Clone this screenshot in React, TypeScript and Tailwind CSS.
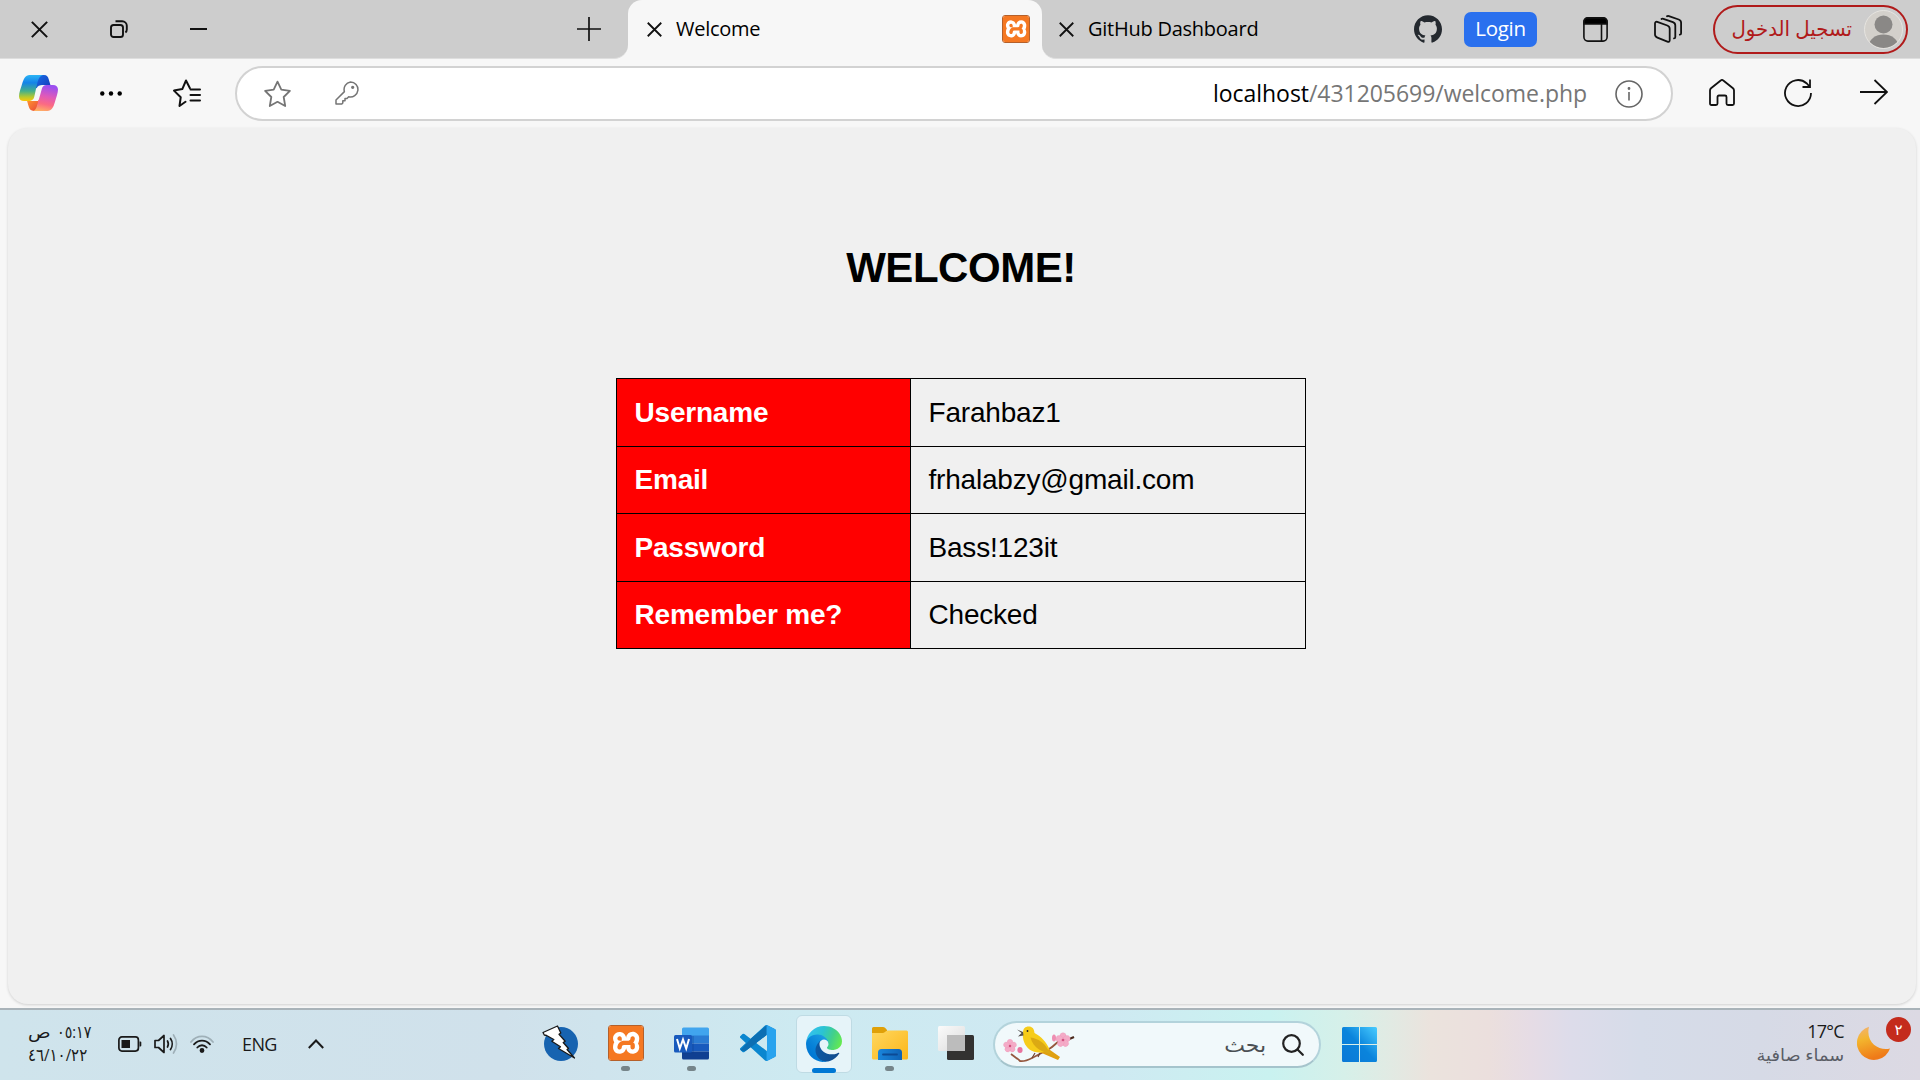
import React from "react";
import { SiGithub, SiXampp } from "react-icons/si";

const rows = [
  ["Username", "Farahbaz1"],
  ["Email", "frhalabzy@gmail.com"],
  ["Password", "Bass!123it"],
  ["Remember me?", "Checked"],
];

const CloseIcon = ({ className }: { className: string }) => (
  <svg className={className} viewBox="0 0 16 16" fill="none" stroke="#111" strokeWidth="1.9" preserveAspectRatio="none">
    <path d="M.8.8l14.4 14.4M15.2.8L.8 15.2" />
  </svg>
);

const RestoreIcon = () => (
  <svg className="h-[18px] w-[18px]" viewBox="0 0 18 18" fill="none" stroke="#111" strokeWidth="1.9">
    <rect x="1" y="5" width="12" height="12" rx="2.6" />
    <path d="M5.5 1.2H12.2a4.6 4.6 0 0 1 4.6 4.6V9.5c0 1.5-.6 2.4-1.4 3" />
  </svg>
);

const XamppIcon = ({ className, glyph }: { className: string; glyph: string }) => (
  <span className={`${className} flex shrink-0 items-center justify-center overflow-hidden border border-[#b5602a] bg-white text-[#f57822]`}>
    <SiXampp className={`${glyph} shrink-0`} />
  </span>
);

const CopilotIcon = () => (
  <svg className="h-[36px] w-[39px]" viewBox="0 0 39 37" preserveAspectRatio="none">
    <defs>
      <linearGradient id="cpA" x1="0" y1="0" x2="0" y2="1">
        <stop offset="0" stopColor="#2cb5f5" />
        <stop offset=".3" stopColor="#1583e8" />
        <stop offset=".62" stopColor="#44b08a" />
        <stop offset=".85" stopColor="#b9c92c" />
        <stop offset="1" stopColor="#fbc60a" />
      </linearGradient>
      <linearGradient id="cpB" x1=".4" y1="0" x2=".2" y2="1">
        <stop offset="0" stopColor="#9c4ff0" />
        <stop offset=".4" stopColor="#e05ab8" />
        <stop offset=".7" stopColor="#fb6a83" />
        <stop offset="1" stopColor="#ffb463" />
      </linearGradient>
      <linearGradient id="cpC" x1="0" y1="0" x2="1" y2="1">
        <stop offset="0" stopColor="#1a6fe8" />
        <stop offset="1" stopColor="#1238b8" />
      </linearGradient>
      <linearGradient id="cpD" x1="0" y1="0" x2="1" y2="1">
        <stop offset="0" stopColor="#ff9a2e" />
        <stop offset="1" stopColor="#e8433d" />
      </linearGradient>
    </defs>
    <path d="M19 0h6c3 0 4 1.800 4.800 4.500L31.500 10.500H25c-3 0-5 1.500-6 4l-3-2z" fill="url(#cpC)" />
    <path d="M8 26.500l1.700 6c.7 2.600 2.200 4.500 5.300 4.500h2l3.500-12-2 1.500z" fill="url(#cpD)" />
    <path d="M18.500 12c1.500-1.300 4-1.700 8.500-1.700L19 26.700h-8z" fill="#f7f7f7" />
    <path d="M24 0H10.500C6.500 0 4.600 4 3.300 8.500 1.800 13.500 0 18.500 0 22c0 3 2 4.700 5 4.700h5.500c2.500 0 4-1.500 4.700-4 1-4 1.800-9 2.800-13C19.200 4.500 20.500 1 24 0z" fill="url(#cpA)" />
    <path d="M14.500 37h14c4 0 5.900-4 7.200-8.500C37.200 23.500 39 18.500 39 15c0-3-2-4.700-5-4.700h-6.500c-2.500 0-4 1.500-4.700 4-1 3.700-2.400 9.200-3.600 13C18 31.500 17.500 35.500 14.500 37z" fill="url(#cpB)" />
  </svg>
);

const STAR = "M14 1.600L17.800 9.600 26.400 10.800 20.200 17 21.700 26 14 21.800 6.300 26 7.800 17 1.600 10.800 10.200 9.600z";

const EdgeIcon = () => (
  <svg className="h-9 w-9 shrink-0" viewBox="0 0 256 256">
    <defs>
      <linearGradient id="edA" x1="60" y1="177" x2="241" y2="177" gradientUnits="userSpaceOnUse">
        <stop offset="0" stopColor="#0c59a4" />
        <stop offset="1" stopColor="#114a8b" />
      </linearGradient>
      <linearGradient id="edB" x1="157" y1="100" x2="46" y2="221" gradientUnits="userSpaceOnUse">
        <stop offset="0" stopColor="#1b9de2" />
        <stop offset=".16" stopColor="#1595df" />
        <stop offset=".67" stopColor="#0680d7" />
        <stop offset="1" stopColor="#0078d4" />
      </linearGradient>
      <linearGradient id="edC" x1="10" y1="40" x2="250" y2="130" gradientUnits="userSpaceOnUse">
        <stop offset="0" stopColor="#35c1f1" />
        <stop offset=".4" stopColor="#2bc3d2" />
        <stop offset=".7" stopColor="#42d08a" />
        <stop offset="1" stopColor="#66eb4e" />
      </linearGradient>
    </defs>
    <path fill="url(#edA)" d="M231 190.500c-3.400 1.800-6.900 3.400-10.500 4.700a101.500 101.500 0 0 1-35.900 6.500c-47.300 0-88.500-32.500-88.500-74.300.1-11.400 6.400-21.900 16.400-27.300-42.800 1.800-53.800 46.400-53.800 72.500 0 73.900 68.100 81.400 82.800 81.400 7.900 0 19.800-2.300 27-4.600l1.300-.4a128.300 128.300 0 0 0 66.600-52.800 4 4 0 0 0-5.400-5.700z" />
    <path fill="url(#edB)" d="M105.700 241.400a79.200 79.200 0 0 1-22.700-21.300 80.700 80.700 0 0 1 29.500-120c3.200-1.500 8.500-4.100 15.600-4a32.400 32.400 0 0 1 25.700 13 31.900 31.900 0 0 1 6.300 18.700c0-.2 24.500-79.600-80-79.600-43.900 0-80 41.700-80 78.200a130.200 130.200 0 0 0 12.100 56 128 128 0 0 0 156.400 67.100 75.500 75.500 0 0 1-62.800-8z" />
    <path fill="url(#edC)" d="M152.300 148.900c-.9 1-3.400 2.500-3.400 5.600 0 2.600 1.700 5.200 4.800 7.300 14.300 10 41.400 8.600 41.500 8.600 10.700 0 21.100-2.900 30.300-8.300a61.400 61.400 0 0 0 30.400-52.900c.3-22.400-8-37.300-11.300-43.900C223.500 23.900 177.700 0 128 0A128 128 0 0 0 0 126.200c.5-36.500 36.800-66 80-66 3.500 0 23.500.3 42 10.100 16.300 8.600 24.900 18.900 30.800 29.200 6.200 10.700 7.300 24.200 7.300 29.500s-2.700 13.300-7.800 19.900z" />
  </svg>
);

const ZapIcon = () => (
  <svg className="h-9 w-9" viewBox="0 0 36 36">
    <circle cx="19" cy="19" r="17" fill="#1763b0" />
    <path d="M1 7.500L15.500 1l3.300 7-1.800 1.200 6.200 7-2 1.300 5.300 6-1.500 1L32.500 33 16.500 23.500l2-1.700-8.700-5.500 2-1.800L4.600 10.500 2.300 10z" fill="#fff" stroke="#1a1a1a" strokeWidth="1.300" strokeLinejoin="round" />
  </svg>
);

const WordIcon = () => (
  <svg className="h-[33px] w-[36px]" viewBox="0 0 36 33">
    <path d="M8 2a1.500 1.500 0 0 1 1.500-1.500h24A1.500 1.500 0 0 1 35 2v7H8z" fill="#41a5ee" />
    <path d="M8 8.500h27v8H8z" fill="#2b7cd3" />
    <path d="M8 16.500h27v8H8z" fill="#185abd" />
    <path d="M8 24.500h27V31a1.500 1.500 0 0 1-1.500 1.500h-24A1.500 1.500 0 0 1 8 31z" fill="#103f91" />
    <rect x="8" y="9" width="12" height="18" fill="#0b3a8a" opacity=".25" />
    <rect x="0" y="8" width="18" height="17.500" rx="1.500" fill="#185abd" />
    <path d="M3 12l2.800 9.500L9 12.500l3.200 9L15 12" fill="none" stroke="#fff" strokeWidth="2" />
  </svg>
);

const VsCodeIcon = () => (
  <svg className="h-9 w-9" viewBox="0 0 24 24">
    <defs>
      <clipPath id="vsR"><rect x="17.700" y="0" width="7" height="24" /></clipPath>
      <clipPath id="vsT"><path d="M8 8.300L18 0v6.600L3.900 17.500 0 17z" /></clipPath>
    </defs>
    {[
      ["#0a86cf", undefined],
      ["#0c6fb3", "url(#vsT)"],
      ["#29a3ee", "url(#vsR)"],
    ].map(([fill, clip]) => (
      <path
        key={fill}
        fill={fill}
        clipPath={clip}
        d="M23.150 2.587L18.210.210a1.494 1.494 0 0 0-1.705.290l-9.460 8.630-4.120-3.128a.999.999 0 0 0-1.276.057L.327 7.261A1 1 0 0 0 .326 8.740L3.899 12 .326 15.260a1 1 0 0 0 .001 1.479L1.650 17.940a.999.999 0 0 0 1.276.057l4.120-3.128 9.460 8.630a1.492 1.492 0 0 0 1.704.290l4.942-2.377A1.500 1.500 0 0 0 24 20.060V3.939a1.500 1.500 0 0 0-.850-1.352zm-5.146 14.861L10.826 12l7.178-5.448v10.896z"
      />
    ))}
  </svg>
);

const FolderIcon = () => (
  <svg className="h-[33px] w-9" viewBox="0 0 36 33">
    <defs>
      <linearGradient id="fo" x1="0" y1="0" x2="1" y2="1">
        <stop offset="0" stopColor="#ffd75e" />
        <stop offset="1" stopColor="#fbb61a" />
      </linearGradient>
      <linearGradient id="fb" x1="0" y1="0" x2="1" y2="0">
        <stop offset="0" stopColor="#1a86dc" />
        <stop offset="1" stopColor="#0f62b4" />
      </linearGradient>
    </defs>
    <path d="M0 1.500A1.500 1.500 0 0 1 1.500 0H11c1.500 0 2.500 1 4 3v6H0z" fill="#e0a008" />
    <path d="M0 6h11c2 0 2.500-2.500 4.500-2.500H34.500A1.500 1.500 0 0 1 36 5v26a1.500 1.500 0 0 1-1.500 1.500h-33A1.500 1.500 0 0 1 0 31z" fill="url(#fo)" />
    <path d="M6 33V25.500A3.500 3.500 0 0 1 9.500 22h17a3.500 3.500 0 0 1 3.500 3.500V33z" fill="url(#fb)" />
    <path d="M11 27.500h14" stroke="#0c4a94" strokeWidth="1.800" strokeLinecap="round" />
  </svg>
);

const TaskViewIcon = () => (
  <svg className="h-[34px] w-9" viewBox="0 0 36 34">
    <defs>
      <linearGradient id="tvA" x1="0" y1="0" x2="1" y2="1">
        <stop offset="0" stopColor="#fbfbfb" />
        <stop offset="1" stopColor="#dcdcdc" />
      </linearGradient>
    </defs>
    <rect x="9" y="9" width="27" height="25" rx="1.500" fill="#333231" />
    <rect x="0" y="0" width="27" height="25" rx="1.500" fill="url(#tvA)" />
    <path d="M9 9h18v16H9z" fill="#bcbcbc" />
  </svg>
);

const Blossom = ({ x, y, s }: { x: number; y: number; s: number }) => (
  <g transform={`translate(${x} ${y}) scale(${s})`}>
    {[0, 72, 144, 216, 288].map((a) => (
      <ellipse key={a} cx="0" cy="-3.600" rx="3" ry="3.400" fill="#f4abc7" stroke="#ec93b6" strokeWidth=".3" transform={`rotate(${a})`} />
    ))}
    <circle r="1.300" fill="#d2517f" />
  </g>
);

const BirdIcon = () => (
  <svg className="h-[39px] w-[72px]" viewBox="0 0 72 39">
    <path d="M8 29c4 3 7 5 9 7 5 1 10-2 14-4l15-8c4-2 6-5 10-8l10-2" fill="none" stroke="#95583f" strokeWidth="1.800" />
    <path d="M64 15l7-3" stroke="#4a2a1c" strokeWidth="2.200" />
    <path d="M40 20l17 12-2 3-21-9z" fill="#e0a010" />
    <path d="M20 7.500c0-4.500 3-6.500 6.500-6 4 .5 4.800 4 5 6.500 7 3.500 11.500 9 15 16-4 4-14 5-20 .5-4.500-3.500-7.500-10-6.500-17z" fill="#f6cc1a" />
    <path d="M27.500 12.500c8 1 14 5.500 17 11.500l5 5.500c-9-2-19.500-6-22-17z" fill="#dba913" />
    <path d="M20 7l-6-2.500L18.500 8 15 11.500l5.500-1z" fill="#55504e" />
    <circle cx="24.500" cy="6" r=".9" fill="#222" />
    <path d="M32 28l-3 5M37 28l-2 4" stroke="#6e4330" strokeWidth="1.200" />
    <Blossom x={7} y={21} s={0.95} />
    <Blossom x={60} y={15} s={1.050} />
    <ellipse cx="51" cy="13" rx="2" ry="3.600" fill="#ee8fb2" />
    <ellipse cx="17" cy="25" rx="2.600" ry="3" fill="#e9749f" />
  </svg>
);

const TaskItem = ({ children, mark }: { children: React.ReactNode; mark?: boolean }) => (
  <div className="flex h-14 w-[56px] flex-col items-center pt-2">
    <div className="flex h-[38px] items-center justify-center">{children}</div>
    {mark && <span className="mt-1 mr-px h-[5px] w-[9px] rounded-full bg-[#76858a]" />}
  </div>
);

export default function App() {
  return (
    <div className="flex h-[1080px] w-[1920px] flex-col overflow-hidden bg-[#f7f7f7] font-['Open_Sans','Noto_Sans','DejaVu_Sans',sans-serif] text-black">
      <header className="flex h-[59px] shrink-0">
        <div className="flex h-full w-[628px] items-center rounded-br-[14px] border-b border-[#dedede] bg-[#cdcdcd]">
          <span className="flex w-[79px] justify-center"><CloseIcon className="h-[17px] w-[17px]" /></span>
          <span className="flex w-[80px] justify-center"><RestoreIcon /></span>
          <span className="flex w-[79px] justify-center"><i className="h-0.5 w-[17px] bg-[#111]" /></span>
          <svg className="mr-[27px] ml-auto h-6 w-6" viewBox="0 0 24 24" stroke="#111" strokeWidth="1.700"><path d="M12 0v24M0 12h24" /></svg>
        </div>
        <div className="w-[414px] bg-gradient-to-b from-[#cdcdcd] from-50% to-[#f7f7f7] to-50%">
          <div className="flex h-full items-center rounded-t-[14px] bg-[#f7f7f7] pr-3 pl-[19px]">
            <CloseIcon className="h-[15px] w-[15px]" />
            <span className="ml-[14px] pb-0.5 text-[20px] tracking-[-0.25px]">Welcome</span>
            <XamppIcon className="mb-px ml-auto h-7 w-7 rounded-[3px]" glyph="h-[28px] w-[28px]" />
          </div>
        </div>
        <div className="flex h-full flex-1 items-center rounded-bl-[14px] border-b border-[#dedede] bg-[#cdcdcd]">
          <div className="flex w-[400px] items-center pl-[17px]">
            <CloseIcon className="h-[15px] w-[15px]" />
            <span className="ml-[14px] pb-px text-[20px] tracking-[-0.25px] whitespace-nowrap">GitHub Dashboard</span>
            <SiGithub className="ml-auto h-7 w-7 text-[#24292f]" />
          </div>
          <span className="ml-[22px] flex h-[35px] w-[73px] items-center justify-center rounded-[7px] bg-[#2a70ee] pb-0.5 text-[20.5px] tracking-[-0.3px] text-white">Login</span>
          <svg className="ml-[46px] h-[25px] w-[25px]" viewBox="0 0 25 25" fill="none" stroke="#111" strokeWidth="1.600">
            <rect x=".9" y=".9" width="23.200" height="23.200" rx="4" />
            <path d="M1 7V4.500A3.500 3.500 0 0 1 4.500 1h16A3.500 3.500 0 0 1 24 4.500V7z" fill="#000" />
            <path d="M18.500 7v17" />
          </svg>
          <svg className="ml-[46px] h-7 w-[29px]" viewBox="0 0 29 28" fill="none" stroke="#111" strokeWidth="1.800" strokeLinejoin="round" strokeLinecap="round">
            <path d="M1 8.500c0-1.500 1-2 2.300-1.600l10 3.600c1.500.6 2.400 1.500 2.400 3.200v11.500c0 1.500-1 2-2.300 1.500l-10-4C1.900 22.100 1 21.200 1 19.600z" />
            <path d="M7.500 4c.5-.4 1.200-.4 1.900-.2l9.500 3.400c1.500.6 2.400 1.500 2.400 3.200v11.500c0 1-.5 1.500-1.300 1.500" />
            <path d="M13 1.300c.5-.4 1.200-.4 1.900-.2l9.800 3.400c1.500.6 2.400 1.500 2.400 3.200v10.500c0 1-.5 1.500-1.300 1.500" />
          </svg>
          <div dir="rtl" className="ml-[30px] flex h-[49px] w-[195px] items-center rounded-full border-2 border-[#b01a1a] pr-[3px]">
            <svg className="h-[39px] w-[39px] shrink-0" viewBox="0 0 39 39">
              <defs><clipPath id="av"><circle cx="19.500" cy="19.500" r="18.500" /></clipPath></defs>
              <circle cx="19.500" cy="19.500" r="19" fill="#d3d0cb" stroke="#e6e4e0" />
              <g clipPath="url(#av)" fill="#8a8886"><circle cx="19.500" cy="14.500" r="9" /><ellipse cx="19.500" cy="35.500" rx="14.500" ry="11" /></g>
            </svg>
            <span className="mr-[12px] flex w-[121px] pb-0.5">
              <span className="origin-right scale-x-[0.965] text-[20.5px] leading-6 whitespace-nowrap text-[#b01a1a]">تسجيل الدخول</span>
            </span>
          </div>
        </div>
      </header>

      <nav className="flex h-[69px] shrink-0 items-center">
        <span className="ml-[19px] pb-px"><CopilotIcon /></span>
        <svg className="mb-px ml-[42px] h-[5px] w-[22px]" viewBox="0 0 22 5"><circle cx="2.300" cy="2.500" r="2.200" /><circle cx="11" cy="2.500" r="2.200" /><circle cx="19.700" cy="2.500" r="2.200" /></svg>
        <svg className="mb-0.5 ml-[51px] h-7 w-7" viewBox="0 0 28 28" fill="none" stroke="#111" strokeWidth="2" strokeLinejoin="round" strokeLinecap="round">
          <path d="M12.500 22.800L6.500 27l1.200-8.700L1 11.600l8.300-1.500L13 1.500l3.800 7.500M17.500 10.500h9.500M17.500 16h9.500M17.500 21.500h9.500" />
        </svg>
        <div className="ml-[34px] flex h-[55px] w-[1438px] items-center rounded-full border-2 border-[#d2d2d2] bg-white">
          <svg className="ml-[26px] h-[28px] w-[29px]" viewBox="0 0 28 28" fill="none" stroke="#757575" strokeWidth="1.800" strokeLinejoin="round"><path d={STAR} /></svg>
          <svg className="mb-px ml-[43px] h-6 w-6" viewBox="0 0 24 24" fill="none" stroke="#757575" strokeWidth="1.500" strokeLinejoin="round">
            <path d="M15.500 1a7.500 7.500 0 1 1-1.800 14.800l-1.700 1.700h-2v2.300H7.800V22l-1 1H1v-4l8.400-8.400A7.500 7.500 0 0 1 15.500 1z" />
            <circle cx="17.700" cy="6.300" r=".9" fill="#757575" />
          </svg>
          <span className="ml-auto text-[23px] tracking-[-0.05px] whitespace-nowrap">localhost<span className="text-[#767676]">/431205699/welcome.php</span></span>
          <svg className="mr-[28px] ml-[28px] h-7 w-7" viewBox="0 0 28 28" fill="none" stroke="#666" strokeWidth="1.600">
            <circle cx="14" cy="14" r="13" /><path d="M14 12v8.500" /><circle cx="14" cy="8.500" r=".6" fill="#666" />
          </svg>
        </div>
        <svg className="mb-0.5 ml-9 h-[27px] w-[26px]" viewBox="0 0 26 27" fill="none" stroke="#111" strokeWidth="1.800" strokeLinejoin="round">
          <path d="M1 11.500c0-1 .3-1.600 1-2.200L11.700 1.500c.8-.7 1.800-.7 2.600 0L24 9.300c.7.600 1 1.200 1 2.200V24.500c0 1-.5 1.500-1.500 1.500h-4.500c-1 0-1.500-.5-1.500-1.500V18c0-1-.5-1.500-1.500-1.500h-6c-1 0-1.500.5-1.500 1.500v6.500c0 1-.5 1.500-1.500 1.500h-4.500C1.500 26 1 25.500 1 24.500z" />
        </svg>
        <svg className="mb-0.5 ml-[49px] h-7 w-7" viewBox="0 0 28 28" fill="none" stroke="#111" strokeWidth="1.800">
          <path d="M27 14A13 13 0 1 1 22.500 4.200L26 8M26 .5V8h-7.500" />
        </svg>
        <svg className="mb-[3px] ml-[48px] h-[26px] w-7" viewBox="0 0 28 26" fill="none" stroke="#111" strokeWidth="1.800"><path d="M0 13h27M14.500 1L27 13 14.500 25" /></svg>
      </nav>

      <div className="flex h-[880px] shrink-0 pr-1 pb-1 pl-2">
        <main className="flex w-full flex-col items-center rounded-[20px] bg-[#f0f0f0] pr-0.5 font-['Liberation_Sans',Arial,sans-serif] shadow-[0_1px_3px_rgba(0,0,0,0.16)]">
          <h1 className="mt-[116px] text-[42px] leading-[48px] font-bold tracking-[-0.45px]">WELCOME!</h1>
          <table className="mt-[86px] w-[690px] table-fixed border-collapse text-left text-[28px] leading-8 tracking-[-0.2px]">
            <tbody>
              {rows.map(([label, value]) => (
                <tr key={label} className="h-[67.5px]">
                  <th className="w-[294px] border border-black bg-[#ff0000] px-[17.5px] pt-px pb-0 font-bold text-white">{label}</th>
                  <td className="border border-black px-[17.5px] pt-px pb-0">{value}</td>
                </tr>
              ))}
            </tbody>
          </table>
        </main>
      </div>

      <footer className="flex h-[72px] shrink-0 items-start border-t-2 border-[#a9b3b9] bg-[linear-gradient(90deg,#cfe4ec_0,#d0e1eb_500px,#cdeaf1_800px,#cfe9f2_1100px,#c9f2f0_1270px,#d6f0e9_1345px,#e0ebe4_1385px,#ebe3dd_1430px,#ebdfdd_1490px,#e6dce5_1530px,#dddcea_1570px,#d6dce9_1640px,#d6dae6_1760px,#dcd9e3_1920px)]">
        <div className="flex h-[70px] w-[534px] items-center">
          <div className="ml-[28px] flex w-[67px] flex-col pb-1 text-[17px] leading-[23px] text-[#1a1a1a]">
            <span className="flex gap-2 whitespace-nowrap" dir="ltr"><span className="origin-left scale-x-110">ص</span><bdo dir="ltr" className="origin-left scale-x-[0.84]">٠٥:١٧</bdo></span>
            <span className="flex whitespace-nowrap"><bdo dir="ltr" className="origin-left scale-x-[0.88]">٤٦/١٠/٢٢</bdo></span>
          </div>
          <svg className="mb-0.5 ml-[23px] h-4 w-6" viewBox="0 0 24 16" fill="none" stroke="#1a1a1a" strokeWidth="1.700">
            <rect x=".9" y=".9" width="19.500" height="14.200" rx="3" /><rect x="3.500" y="4" width="8.500" height="8" fill="#1a1a1a" stroke="none" /><path d="M21.500 5.500h.8a1 1 0 0 1 1 1v3a1 1 0 0 1-1 1h-.8z" fill="#1a1a1a" stroke="none" />
          </svg>
          <svg className="mb-0.5 ml-3 h-[22px] w-6" viewBox="0 0 24 22" fill="none" stroke="#1a1a1a" strokeWidth="1.700" strokeLinejoin="round" strokeLinecap="round">
            <path d="M1 7.500h3.500L10 2.500v17l-5.500-5H1z" /><path d="M13.500 8c1 1.800 1 4.200 0 6M16.500 5.500c2.200 3.200 2.200 7.800 0 11" /><path d="M19.500 2c4 5.500 4 12.500 0 18" stroke="#9fb0b8" />
          </svg>
          <svg className="mb-[3px] ml-3 h-[18px] w-6" viewBox="0 0 24 18" fill="none" stroke="#1a1a1a" strokeWidth="1.800" strokeLinecap="round">
            <path d="M1 7C7-.5 17-.5 23 7" stroke="#9fb0b8" /><path d="M4 9.300c4.500-5 11.500-5 16 0M7.300 12.500c2.700-3 6.700-3 9.400 0" /><circle cx="12" cy="15.500" r="1.500" fill="#1a1a1a" />
          </svg>
          <span className="ml-[28px] w-[36px] pb-0.5 text-[18px] tracking-[-0.6px] text-[#1a1a1a]">ENG</span>
          <svg className="mb-0.5 ml-[30px] h-[10px] w-4" viewBox="0 0 16 10" fill="none" stroke="#1a1a1a" strokeWidth="2"><path d="M.8 9L8 1.500 15.200 9" /></svg>
        </div>

        <div className="flex h-[70px] items-start gap-[10px] pt-1.5">
          <div className="-ml-[2px] w-[56px]"><TaskItem><ZapIcon /></TaskItem></div>
          <TaskItem mark><XamppIcon className="h-9 w-9 rounded-[3px]" glyph="h-[36px] w-[36px]" /></TaskItem>
          <TaskItem mark><WordIcon /></TaskItem>
          <TaskItem><VsCodeIcon /></TaskItem>
          <div className="-mt-px flex h-[58px] w-[56px] flex-col items-center rounded-[6px] border border-[#bfdbe4] bg-[#e6f4f9] pt-[10px]">
            <EdgeIcon /><span className="mt-1.5 h-[5px] w-6 shrink-0 rounded-full bg-[#0078d4]" />
          </div>
          <TaskItem mark><FolderIcon /></TaskItem>
          <TaskItem><TaskViewIcon /></TaskItem>
        </div>

        <div dir="rtl" className="mt-[11px] ml-[9px] flex h-[47px] w-[328px] items-center rounded-full border-2 border-[#b3d3db] border-b-[#a5c4cc] bg-[#f1f9fb] pr-[15px]">
          <svg className="h-[22px] w-[22px]" viewBox="0 0 22 22" fill="none" stroke="#222" strokeWidth="2.200" strokeLinecap="round"><circle cx="9.500" cy="9.500" r="8.300" /><path d="M15.500 15.500l5.300 5.300" /></svg>
          <span className="mr-[16px] origin-right scale-x-110 text-[20px] text-[#4a4f52]">بحث</span>
          <span className="mr-auto ml-[8px]"><BirdIcon /></span>
        </div>
        <svg className="mt-[17px] ml-[21px] h-[35px] w-[35px]" viewBox="0 0 35 35">
          <defs><linearGradient id="win" x1="0" y1="1" x2="1" y2="0"><stop offset="0" stopColor="#0a78d6" /><stop offset=".5" stopColor="#0a84dc" /><stop offset="1" stopColor="#48ccff" /></linearGradient></defs>
          <path fill="url(#win)" d="M1.500 0H17v17H0V1.500A1.500 1.500 0 0 1 1.500 0zM18 0h15.500A1.500 1.500 0 0 1 35 1.500V17H18zM0 18h17v17H1.500A1.500 1.500 0 0 1 0 33.500zM18 18h17v15.500a1.500 1.500 0 0 1-1.500 1.500H18z" />
        </svg>

        <div className="mr-[9px] ml-auto flex h-[70px] items-start">
          <div className="flex flex-col items-end pt-[9px] text-[18px] leading-6 text-[#1a1a1a]">
            <span className="tracking-[-0.7px]">17°C</span>
            <span dir="rtl" className="origin-right scale-x-[1.08] text-[16.5px] whitespace-nowrap text-[#5a5d66]">سماء صافية</span>
          </div>
          <div className="relative ml-[13px] h-[70px] w-[54px]">
            <svg className="mt-[16px] h-[34px] w-[34px]" viewBox="0 0 34 34">
              <defs><linearGradient id="mo" x1="0" y1="0" x2=".3" y2="1"><stop offset="0" stopColor="#f2b27a" /><stop offset=".4" stopColor="#f3b52e" /><stop offset="1" stopColor="#ef7a18" /></linearGradient></defs>
              <path d="M12 .7A17 17 0 1 0 33 22.500C23 25.500 8 17 12 .7z" fill="url(#mo)" />
            </svg>
            <span className="absolute top-[7px] right-0 flex h-[25px] w-[25px] items-center justify-center rounded-full bg-[#c42b1c] text-[15px] leading-none text-white">٢</span>
          </div>
        </div>
      </footer>
    </div>
  );
}
